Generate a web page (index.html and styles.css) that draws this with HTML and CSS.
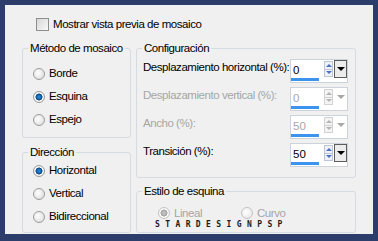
FILE: index.html
```html
<!DOCTYPE html>
<html>

<head>
    <title>Mosaico</title>
    <meta charset="utf-8">
    <link rel="stylesheet" href="styles.css">
</head>

<body>
    <main class="panel">

        <label class="check"><span class="box"></span>Mostrar vista previa de mosaico</label>

        <div class="columnas">
            <div class="izq">
                <fieldset class="metodo">
                    <legend>Método de mosaico</legend>
                    <label class="radio"><span class="dot"></span>Borde</label>
                    <label class="radio on"><span class="dot"></span>Esquina</label>
                    <label class="radio"><span class="dot"></span>Espejo</label>
                </fieldset>

                <fieldset class="direccion">
                    <legend>Dirección</legend>
                    <label class="radio on"><span class="dot"></span>Horizontal</label>
                    <label class="radio"><span class="dot"></span>Vertical</label>
                    <label class="radio"><span class="dot"></span>Bidireccional</label>
                </fieldset>
            </div>

            <div class="der">
                <fieldset class="config">
                    <legend>Configuración</legend>

                    <div class="fila">
                        <span class="etiqueta">Desplazamiento horizontal (%):</span>
                        <div class="campo">
                            <span class="valor">0</span>
                            <span class="flechas"><i class="up"></i><i class="down"></i></span>
                            <span class="menu"></span>
                        </div>
                    </div>

                    <div class="fila off">
                        <span class="etiqueta">Desplazamiento vertical (%):</span>
                        <div class="campo">
                            <span class="valor">0</span>
                            <span class="flechas"><i class="up"></i><i class="down"></i></span>
                            <span class="menu"></span>
                        </div>
                    </div>

                    <div class="fila off">
                        <span class="etiqueta">Ancho (%):</span>
                        <div class="campo">
                            <span class="valor">50</span>
                            <span class="flechas"><i class="up"></i><i class="down"></i></span>
                            <span class="menu"></span>
                        </div>
                    </div>

                    <div class="fila">
                        <span class="etiqueta">Transición (%):</span>
                        <div class="campo">
                            <span class="valor">50</span>
                            <span class="flechas"><i class="up"></i><i class="down"></i></span>
                            <span class="menu"></span>
                        </div>
                    </div>
                </fieldset>

                <fieldset class="estilo">
                    <legend>Estilo de esquina</legend>
                    <div class="opciones">
                        <label class="radio off on"><span class="dot"></span>Lineal</label>
                        <label class="radio off curvo"><span class="dot"></span>Curvo</label>
                    </div>
                    <p class="firma">STARDESIGNPSP</p>
                </fieldset>
            </div>
        </div>

    </main>
</body>

</html>
```

FILE: styles.css
```css
body {
    margin: 0;
    background-color: #2c3d6c;
    color: #000;
    font-family: "Liberation Sans", Arial, sans-serif;
    font-size: 11.5px;
    line-height: 13px;
    letter-spacing: -0.45px;
    white-space: nowrap;
}

.panel {
    display: block;
    height: 229px;
    margin: 5px 5px 7px 5px;
    padding: 13px 17px 0 17px;
    box-sizing: border-box;
    background-color: #f0f0f0;
}

/* casilla de arriba */

.check {
    display: flex;
    align-items: center;
    gap: 4px;
    height: 13px;
    margin-left: 14px;
}

.box {
    width: 13px;
    height: 13px;
    box-sizing: border-box;
    border: 1px solid #8e8e8e;
    background: linear-gradient(135deg, #d8d8d8, #f8f8f8);
}

.columnas {
    display: flex;
    gap: 5px;
    margin-top: 11px;
}

.izq {
    width: 109px;
    display: flex;
    flex-direction: column;
}

.der {
    width: 220px;
    display: flex;
    flex-direction: column;
}

fieldset {
    margin: 0;
    padding: 0;
    min-width: 0;
    border: 1px solid #d4dbe1;
    border-radius: 3px;
}

legend {
    margin-left: 5px;
    padding: 0 2px;
    line-height: 13px;
}

.metodo {
    padding: 7px 0 6px 0;
}

.direccion {
    margin-top: 8px;
    padding: 0 0 4px 0;
}

/* radios */

.radio {
    display: flex;
    align-items: center;
    gap: 4px;
    height: 23px;
    margin-left: 10px;
}

.dot {
    width: 12px;
    height: 12px;
    box-sizing: border-box;
    border-radius: 50%;
    border: 1px solid #9c9c9c;
    background: radial-gradient(circle at 40% 40%, #ffffff, #d6d6d6);
}

.on .dot {
    background: radial-gradient(circle, #2a8ee0 0, #1466b4 2.2px, #0d3e70 3.2px, #ffffff 3.8px, #d6d6d6 100%);
}

.radio.off {
    color: #a6a6a6;
}

.off .dot {
    border-color: #c4c4c4;
    background: radial-gradient(circle at 40% 40%, #ffffff, #e2e2e2);
}

.on.off .dot {
    background: radial-gradient(circle, #c8c8c8 0, #b0b0b0 2.4px, #9a9a9a 3.2px, #ffffff 3.8px, #e2e2e2 100%);
}

/* configuracion */

.config {
    padding: 2px 0 8px 0;
}

.fila {
    display: flex;
    align-items: flex-start;
    height: 28px;
}

.etiqueta {
    margin: 4px 0 0 6px;
}

.fila.off .etiqueta {
    color: #a6a6a6;
}

.campo {
    display: flex;
    align-items: flex-start;
    width: 58px;
    height: 24px;
    margin: 2px 7px 0 auto;
    box-sizing: border-box;
    border: 1px solid #ccd3da;
    background-color: #fff;
    flex-shrink: 0;
}

.valor {
    width: 31px;
    height: 22px;
    box-sizing: border-box;
    padding: 4px 0 0 2px;
    letter-spacing: 0;
    background: linear-gradient(#3d94ee, #3d94ee) no-repeat 0 18px / 28px 3px;
}

.off .valor {
    color: #a6a6a6;
}

.flechas {
    display: flex;
    flex-direction: column;
    width: 9px;
    height: 16px;
    margin: 1px 0 0 2px;
    box-sizing: border-box;
    border: 1px solid #bcc6d6;
    background-color: #eef1f6;
}

.flechas i {
    flex: 1;
    display: flex;
    align-items: center;
    justify-content: center;
}

.flechas i::after {
    content: "";
    border-left: 3px solid transparent;
    border-right: 3px solid transparent;
}

.flechas .up::after {
    border-bottom: 3px solid #4f6fc4;
}

.flechas .down {
    border-top: 1px solid #bcc6d6;
}

.flechas .down::after {
    border-top: 3px solid #4f6fc4;
}

.off .flechas {
    border-color: #d2d2d2;
    background-color: #f4f4f4;
}

.off .flechas .up::after {
    border-bottom-color: #b4b4b4;
}

.off .flechas .down {
    border-top-color: #d2d2d2;
}

.off .flechas .down::after {
    border-top-color: #b4b4b4;
}

.menu {
    display: flex;
    align-items: center;
    justify-content: center;
    width: 13px;
    height: 18px;
    margin-left: 1px;
    box-sizing: border-box;
    border: 1px solid #5c5c5c;
    background-color: #ececec;
}

.menu::after {
    content: "";
    border-left: 4px solid transparent;
    border-right: 4px solid transparent;
    border-top: 4px solid #000;
}

.off .menu {
    border-color: transparent;
    background-color: #fff;
}

.off .menu::after {
    border-top-color: #a8a8a8;
}

/* estilo de esquina */

.estilo {
    margin-top: 7px;
    padding: 8px 0 3px 0;
}

.opciones {
    display: flex;
}

.opciones .radio {
    height: 14px;
    margin-left: 21px;
}

.opciones .curvo {
    margin-left: 39px;
}

.firma {
    margin: 1px 0 0 18px;
    height: 8px;
    font-family: "DejaVu Sans Mono", monospace;
    font-weight: bold;
    font-size: 8px;
    line-height: 8px;
    letter-spacing: 5.4px;
    color: #1c1c1c;
}
```
